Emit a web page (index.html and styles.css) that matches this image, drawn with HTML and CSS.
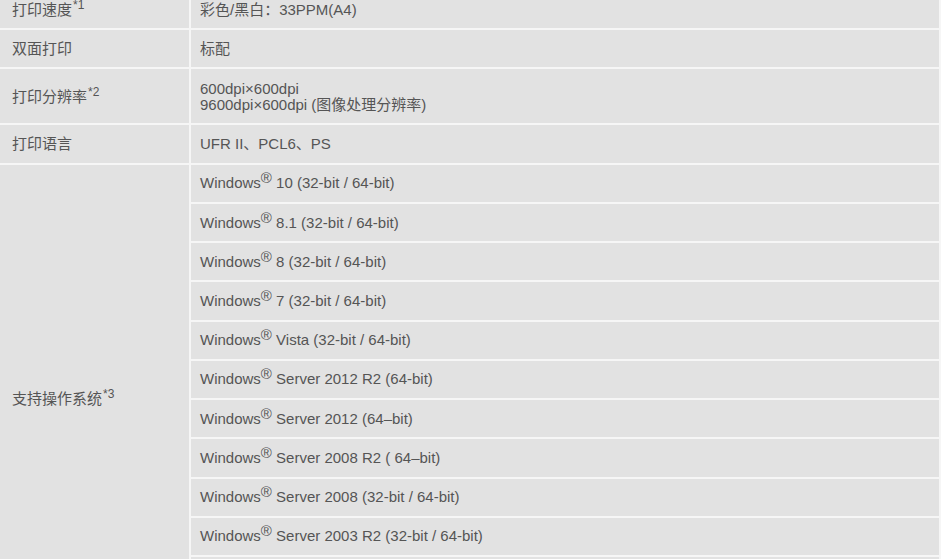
FILE: index.html
```html
<!DOCTYPE html>
<html lang="zh-CN">
<head>
<meta charset="utf-8">
<title>规格</title>
<link rel="stylesheet" href="styles.css">
</head>
<body>
<table class="spec">
  <tbody>
    <tr>
      <td class="label">打印速度<sup class="note">*1</sup></td>
      <td class="value">彩色/黑白：33PPM(A4)</td>
    </tr>
    <tr>
      <td class="label">双面打印</td>
      <td class="value">标配</td>
    </tr>
    <tr class="tall">
      <td class="label">打印分辨率<sup class="note">*2</sup></td>
      <td class="value">600dpi×600dpi<br>9600dpi×600dpi (图像处理分辨率)</td>
    </tr>
    <tr>
      <td class="label">打印语言</td>
      <td class="value">UFR II、PCL6、PS</td>
    </tr>
    <tr>
      <td class="label" rowspan="12">支持操作系统<sup class="note">*3</sup></td>
      <td class="value">Windows<sup class="reg">®</sup> 10 (32-bit / 64-bit)</td>
    </tr>
    <tr><td class="value">Windows<sup class="reg">®</sup> 8.1 (32-bit / 64-bit)</td></tr>
    <tr><td class="value">Windows<sup class="reg">®</sup> 8 (32-bit / 64-bit)</td></tr>
    <tr><td class="value">Windows<sup class="reg">®</sup> 7 (32-bit / 64-bit)</td></tr>
    <tr><td class="value">Windows<sup class="reg">®</sup> Vista (32-bit / 64-bit)</td></tr>
    <tr><td class="value">Windows<sup class="reg">®</sup> Server 2012 R2 (64-bit)</td></tr>
    <tr><td class="value">Windows<sup class="reg">®</sup> Server 2012 (64–bit)</td></tr>
    <tr><td class="value">Windows<sup class="reg">®</sup> Server 2008 R2 ( 64–bit)</td></tr>
    <tr><td class="value">Windows<sup class="reg">®</sup> Server 2008 (32-bit / 64-bit)</td></tr>
    <tr><td class="value">Windows<sup class="reg">®</sup> Server 2003 R2 (32-bit / 64-bit)</td></tr>
    <tr><td class="value">Windows<sup class="reg">®</sup> Server 2003 (32-bit / 64-bit)</td></tr>
    <tr><td class="value">Mac OS X 10.6.8 或更高版本</td></tr>
  </tbody>
</table>
</body>
</html>
```
FILE: styles.css
```css
html, body {
  margin: 0;
  padding: 0;
  background: #ffffff;
  overflow: hidden;
}

.spec {
  margin-top: -9px;
  width: 941px;
  border-collapse: separate;
  border-spacing: 0;
  table-layout: fixed;
  font-family: "Liberation Sans", Arial, "Noto Sans CJK SC", sans-serif;
  font-size: 15px;
  color: #555555;
}

.spec td {
  background: #e2e2e2;
  border-right: 2px solid #f6f6f6;
  border-bottom: 2px solid #f6f6f6;
  line-height: 16px;
  padding: 10.6px 10px 10.65px;
  vertical-align: middle;
  text-align: left;
  white-space: nowrap;
}

.spec td.label {
  width: 167px;
  padding-left: 12px;
}

.spec td.value {
  padding-left: 9px;
}

.spec tr.tall td {
  padding-top: 12px;
  padding-bottom: 10px;
}

.note {
  font-size: 12px;
  line-height: 0;
  vertical-align: 6px;
  margin-left: 1px;
}

.reg {
  font-size: 15px;
  line-height: 0;
  vertical-align: 5px;
}
```
